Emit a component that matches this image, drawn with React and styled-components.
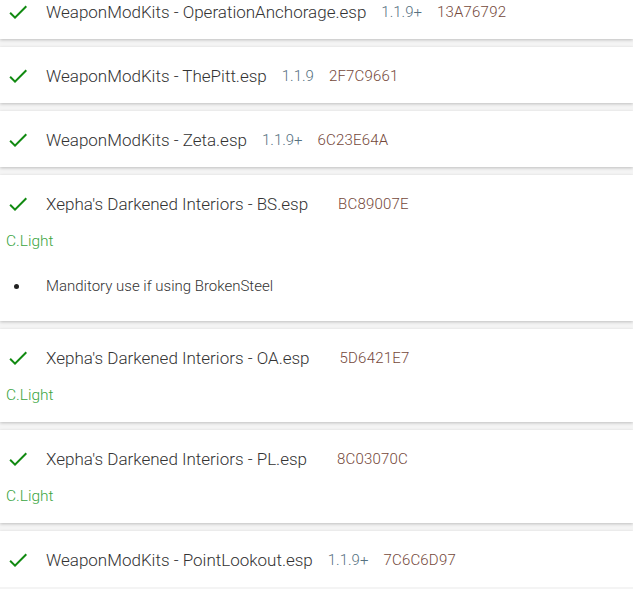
import React from 'react';
import styled, { createGlobalStyle } from 'styled-components';
import { MdCheck } from 'react-icons/md';

const GlobalStyle = createGlobalStyle`
  body {
    margin: 0;
    background: #f4f4f4;
    font-family: Roboto, "Noto Sans", Arial, sans-serif;
    overflow: hidden;
  }
`;

const List = styled.div`
  display: flex;
  flex-direction: column;
  gap: 8px;
  margin-top: -17px;
`;

const Card = styled.div`
  background: #fff;
  box-shadow: 0 1px 3px rgba(0, 0, 0, 0.22);
  padding: 0 6px;
`;

const Header = styled.div`
  box-sizing: border-box;
  height: 56px;
  padding-top: 2px;
  display: flex;
  align-items: center;
`;

const Check = styled(MdCheck)`
  color: #118a11;
  flex: none;
  margin-right: 16px;
`;

const Name = styled.span`
  font-size: 17px;
  font-weight: 300;
  color: #333;
`;

const Version = styled.span`
  font-size: 15px;
  font-weight: 300;
  color: #56717f;
  margin: 0 15px;
`;

const Crc = styled.span`
  font-size: 15px;
  font-weight: 300;
  color: #74483a;
  letter-spacing: 0.2px;
`;

const Author = styled.div`
  font-size: 15.5px;
  font-weight: 300;
  line-height: 18px;
  color: #3aa53f;
  padding: 1px 0 18px;
`;

const Notes = styled.ul`
  list-style: none;
  margin: 0;
  padding: 9px 0 26px;
`;

const Note = styled.li`
  display: flex;
  align-items: center;
  font-size: 15px;
  font-weight: 300;
  line-height: 18px;
  color: #333;
  &::before {
    content: '';
    width: 5px;
    height: 5px;
    border-radius: 50%;
    background: #222;
    margin: 0 27px 0 8px;
    flex: none;
  }
`;

const mods = [
  { name: 'WeaponModKits - OperationAnchorage.esp', version: '1.1.9+', crc: '13A76792' },
  { name: 'WeaponModKits - ThePitt.esp', version: '1.1.9', crc: '2F7C9661' },
  { name: 'WeaponModKits - Zeta.esp', version: '1.1.9+', crc: '6C23E64A' },
  {
    name: "Xepha's Darkened Interiors - BS.esp",
    version: '',
    crc: 'BC89007E',
    author: 'C.Light',
    notes: ['Manditory use if using BrokenSteel'],
  },
  { name: "Xepha's Darkened Interiors - OA.esp", version: '', crc: '5D6421E7', author: 'C.Light' },
  { name: "Xepha's Darkened Interiors - PL.esp", version: '', crc: '8C03070C', author: 'C.Light' },
  { name: 'WeaponModKits - PointLookout.esp', version: '1.1.9+', crc: '7C6C6D97' },
];

const App = () => {
  return (
    <>
      <GlobalStyle />
      <List>
        {mods.map((mod) => (
          <Card key={mod.name}>
            <Header>
              <Check size={24} />
              <Name>{mod.name}</Name>
              <Version>{mod.version}</Version>
              <Crc>{mod.crc}</Crc>
            </Header>
            {mod.author && <Author>{mod.author}</Author>}
            {mod.notes && (
              <Notes>
                {mod.notes.map((n) => (
                  <Note key={n}>{n}</Note>
                ))}
              </Notes>
            )}
          </Card>
        ))}
      </List>
    </>
  );
};

export default App;
